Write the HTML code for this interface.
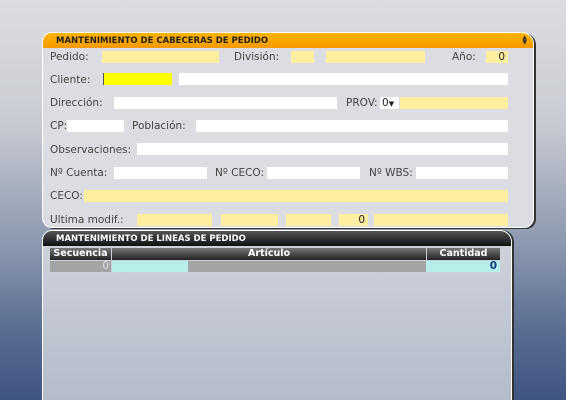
<!DOCTYPE html>
<html style="width:566px;height:400px;overflow:hidden;background:#3f5581"><head><meta charset="utf-8"><style>
*{margin:0;padding:0;box-sizing:border-box}
body{width:566px;height:400px;overflow:hidden;position:relative;font-family:"DejaVu Sans","Liberation Sans",sans-serif;font-size:10.5px;color:#444;
background:linear-gradient(180deg,#dcdde1 0px,#c9ccd3 120px,#8e9ab0 240px,#5a6d92 330px,#3f5581 400px)}
.p1{position:absolute;left:42px;top:32px;width:492px;height:196px;background:#dcdde2;border:1px solid #fff;border-radius:10px 12px 10px 10px;box-shadow:2px 1px 0 #333}
.h1{position:absolute;left:0;top:0;right:0;height:15px;background:linear-gradient(#ffb400,#f59a00);border-radius:9px 11px 0 0;font-weight:bold;font-size:8.5px;color:#222;padding:3px 0 0 13px}
.p2{position:absolute;left:42px;top:230px;width:470px;height:170px;background:linear-gradient(#d0d3da,#b4bccb);border:1px solid #fff;border-bottom:none;border-radius:10px 12px 0 0;box-shadow:2px 0 0 #333}
.h2{position:absolute;left:0;top:0;right:0;height:15px;background:linear-gradient(#555,#111);border-radius:9px 11px 0 0;font-weight:bold;font-size:8.5px;color:#fff;padding:3px 0 0 13px}
.l{position:absolute;white-space:nowrap;line-height:12px}
.f{position:absolute;height:12px}
.y{background:#fdeea0}
.w{background:#fff}
.th{position:absolute;top:248px;height:12px;background:linear-gradient(#777,#222);color:#fff;font-weight:bold;font-size:9.5px;text-align:center;line-height:12px}
</style></head><body>
<div class="p1"><div class="h1">MANTENIMIENTO DE CABECERAS DE PEDIDO</div>
<div style="position:absolute;right:6px;top:2px;font-size:6px;line-height:5px;color:#333">▲<br>▼</div></div>
<div class="p2"><div class="h2">MANTENIMIENTO DE LINEAS DE PEDIDO</div></div>

<div class="l" style="left:50px;top:51px">Pedido:</div>
<div class="f y" style="left:102px;top:51px;width:117px"></div>
<div class="l" style="left:234px;top:51px">División:</div>
<div class="f y" style="left:291px;top:51px;width:23px"></div>
<div class="f y" style="left:326px;top:51px;width:99px"></div>
<div class="l" style="left:452px;top:51px">Año:</div>
<div class="f y" style="left:486px;top:51px;width:22px;text-align:right;padding-right:3px;color:#222;line-height:12px">0</div>

<div class="l" style="left:50px;top:74px">Cliente:</div>
<div class="f" style="left:103px;top:73px;width:69px;background:#ffff00;border-left:1px solid #555"></div>
<div class="f w" style="left:179px;top:73px;width:329px"></div>

<div class="l" style="left:50px;top:97px">Dirección:</div>
<div class="f w" style="left:114px;top:97px;width:223px"></div>
<div class="l" style="left:346px;top:97px">PROV:</div>
<div class="f w" style="left:380px;top:97px;width:19px;color:#222;padding-left:2px;line-height:12px">0<span style="font-size:7px">▼</span></div>
<div class="f y" style="left:400px;top:97px;width:108px"></div>

<div class="l" style="left:50px;top:120px">CP:</div>
<div class="f w" style="left:67px;top:120px;width:57px"></div>
<div class="l" style="left:132px;top:120px">Población:</div>
<div class="f w" style="left:196px;top:120px;width:312px"></div>

<div class="l" style="left:50px;top:144px">Observaciones:</div>
<div class="f w" style="left:137px;top:143px;width:371px"></div>

<div class="l" style="left:50px;top:167px">Nº Cuenta:</div>
<div class="f w" style="left:114px;top:167px;width:93px"></div>
<div class="l" style="left:215px;top:167px">Nº CECO:</div>
<div class="f w" style="left:267px;top:167px;width:93px"></div>
<div class="l" style="left:369px;top:167px">Nº WBS:</div>
<div class="f w" style="left:416px;top:167px;width:92px"></div>

<div class="l" style="left:50px;top:190px">CECO:</div>
<div class="f y" style="left:84px;top:190px;width:424px"></div>

<div class="l" style="left:50px;top:214px">Ultima modif.:</div>
<div class="f y" style="left:137px;top:214px;width:75px"></div>
<div class="f y" style="left:221px;top:214px;width:57px"></div>
<div class="f y" style="left:286px;top:214px;width:45px"></div>
<div class="f y" style="left:339px;top:214px;width:29px;text-align:right;padding-right:3px;color:#222;line-height:12px">0</div>
<div class="f y" style="left:374px;top:214px;width:134px"></div>

<div class="th" style="left:50px;width:61px">Secuencia</div>
<div class="th" style="left:112px;width:314px">Artículo</div>
<div class="th" style="left:427px;width:73px">Cantidad</div>
<div class="f" style="left:50px;top:261px;width:61px;height:11px;background:#a4a4a4;color:#ddd;text-align:right;padding-right:2px;line-height:11px">0</div>
<div class="f" style="left:112px;top:261px;width:76px;height:11px;background:#b8eeea"></div>
<div class="f" style="left:188px;top:261px;width:238px;height:11px;background:#a4a4a4"></div>
<div class="f" style="left:426px;top:261px;width:74px;height:11px;background:#b8eeea;color:#123a80;font-weight:bold;text-align:right;padding-right:3px;line-height:11px">0</div>
</body></html>
